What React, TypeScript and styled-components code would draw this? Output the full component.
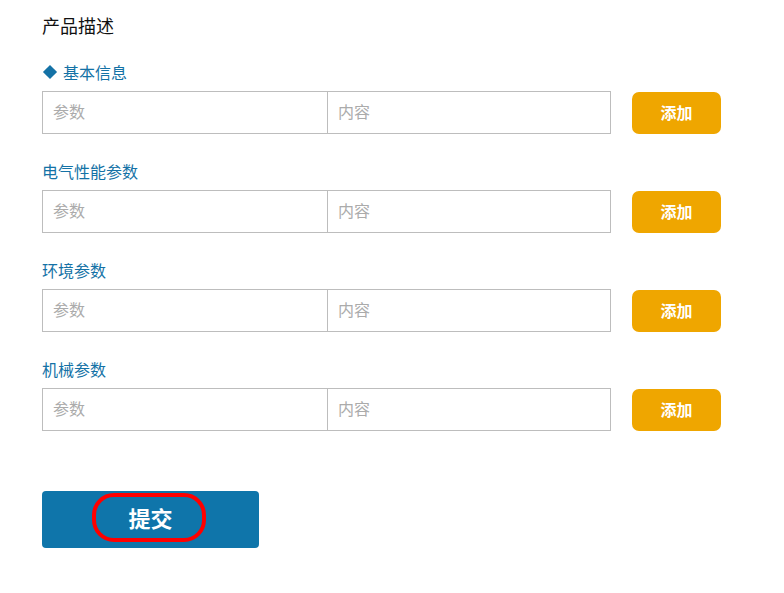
import React from "react";
import styled, { createGlobalStyle } from "styled-components";

const Global = createGlobalStyle`
  html, body { margin: 0; padding: 0; background: #fff; }
  body { font-family: "Noto Sans CJK SC", "Noto Sans", sans-serif; }
  * { box-sizing: border-box; }
`;

const Page = styled.div`
  padding: 13px 0 0 42px;
  width: 784px;
`;

const Title = styled.h2`
  margin: 0 0 25px;
  font-size: 18px;
  line-height: 24px;
  font-weight: 400;
  color: #111;
`;

const Section = styled.section`
  margin-bottom: 27px;
`;

const Label = styled.div`
  display: flex;
  align-items: center;
  gap: 6px;
  height: 22px;
  padding-bottom: 2px;
  margin-bottom: 7px;
  font-size: 16px;
  line-height: 20px;
  color: #1472a6;
`;

const Diamond = styled.span`
  width: 10px;
  height: 10px;
  margin-left: 3px;
  margin-right: 2px;
  background: #1472a6;
  transform: rotate(45deg);
`;

const Row = styled.div`
  display: flex;
  align-items: center;
  gap: 21px;
`;

const Fields = styled.div`
  display: grid;
  grid-template-columns: 284px 284px;
  width: 569px;
  height: 43px;
  border: 1px solid #bdbdbd;
`;

const Field = styled.input<{ $divider?: boolean }>`
  border: none;
  border-left: ${(p) => (p.$divider ? "1px solid #bdbdbd" : "none")};
  outline: none;
  height: 41px;
  padding: 0 0 3px 10px;
  font-family: inherit;
  font-size: 16px;
  color: #333;
  background: transparent;
  &::placeholder { color: #ababab; }
`;

const AddButton = styled.button`
  width: 89px;
  height: 42px;
  padding: 0 0 2px;
  border: none;
  border-radius: 7px;
  background: #efa600;
  color: #fff;
  font-family: inherit;
  font-size: 16px;
  font-weight: 700;
  cursor: pointer;
`;

const Submit = styled.button`
  position: relative;
  margin-top: 33px;
  width: 217px;
  height: 57px;
  padding: 0 0 5px;
  border: none;
  border-radius: 4px;
  background: #0f75aa;
  color: #fff;
  font-family: inherit;
  font-size: 22px;
  font-weight: 700;
  cursor: pointer;
`;

const Highlight = styled.span`
  position: absolute;
  left: 50px;
  top: 2px;
  width: 114px;
  height: 49px;
  border: 4px solid #ff0000;
  border-radius: 22px;
  pointer-events: none;
`;

const sections = [
  { name: "基本信息", marked: true },
  { name: "电气性能参数" },
  { name: "环境参数" },
  { name: "机械参数" },
];

export default function App() {
  return (
    <Page>
      <Global />
      <Title>产品描述</Title>
      {sections.map((s) => (
        <Section key={s.name}>
          <Label>
            {s.marked && <Diamond />}
            {s.name}
          </Label>
          <Row>
            <Fields>
              <Field placeholder="参数" />
              <Field $divider placeholder="内容" />
            </Fields>
            <AddButton>添加</AddButton>
          </Row>
        </Section>
      ))}
      <Submit>
        提交
        <Highlight />
      </Submit>
    </Page>
  );
}
